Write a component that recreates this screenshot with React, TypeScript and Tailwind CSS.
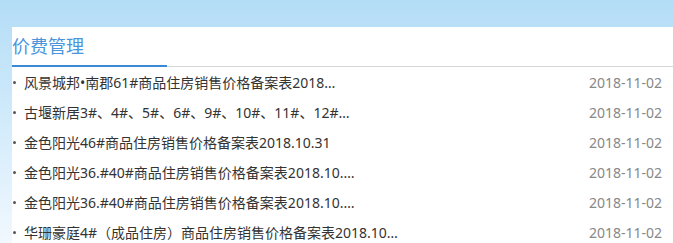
const items = [
  { title: '风景城邦•南郡61#商品住房销售价格备案表2018…', date: '2018-11-02' },
  { title: '古堰新居3#、4#、5#、6#、9#、10#、11#、12#…', date: '2018-11-02' },
  { title: '金色阳光46#商品住房销售价格备案表2018.10.31', date: '2018-11-02' },
  { title: '金色阳光36.#40#商品住房销售价格备案表2018.10.…', date: '2018-11-02' },
  { title: '金色阳光36.#40#商品住房销售价格备案表2018.10.…', date: '2018-11-02' },
  { title: '华珊豪庭4#（成品住房）商品住房销售价格备案表2018.10…', date: '2018-11-02' },
];

export default function App() {
  return (
    <div
      className="h-[243px] w-[673px] overflow-hidden bg-gradient-to-b from-[#b3ddf6] via-[#d2ebfb] to-[#f1f8fe] pt-[27px] pl-[12px]"
      style={{ fontFamily: '"Microsoft YaHei", "Noto Sans", "Noto Sans CJK SC", sans-serif' }}
    >
      <div className="h-full bg-white">
        <div className="border-b border-[#d6d6d6]">
          <div className="-mb-px h-[40px] w-[155px] border-b-2 border-[#3a88d6]">
            <span className="text-[18px] leading-[38px] text-[#4b95dd]">价费管理</span>
          </div>
        </div>
        <ul>
          {items.map((item, i) => (
            <li key={i} className="flex h-[30px] items-center pr-[11px] text-[14px]">
              <span className="ml-px h-[3px] w-[3px] rounded-full bg-[#555]" />
              <a className="ml-[8px] flex-1 truncate text-[#333]">{item.title}</a>
              <span className="text-[#888]">{item.date}</span>
            </li>
          ))}
        </ul>
      </div>
    </div>
  );
}
